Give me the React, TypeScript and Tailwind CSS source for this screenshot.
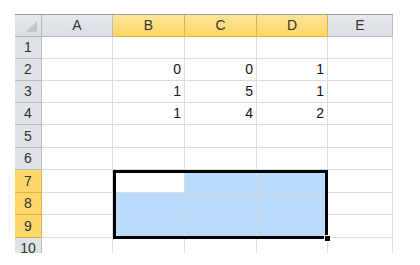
import React from "react";

const cols = ["A", "B", "C", "D", "E"];
const colWidths = [71, 72, 72, 71, 65];
const rowHeights = [22, 22, 22, 22, 23, 22, 23, 22, 23, 22];
const selCols = ["B", "C", "D"];
const selRows = [7, 8, 9];

const data: Record<string, string> = {
  B2: "0",
  C2: "0",
  D2: "1",
  B3: "1",
  C3: "5",
  D3: "1",
  B4: "1",
  C4: "4",
  D4: "2",
};

export default function App() {
  return (
    <div
      className="relative h-[265px] w-[420px] overflow-hidden bg-white pl-[15px] pt-[14px] text-[14px] text-[#111]"
      style={{ fontFamily: '"Liberation Sans", Arial, sans-serif' }}
    >
      <div className="relative h-[239px] w-[378px] overflow-hidden border-t border-[#9c9c9c]">
        <div
          className="grid"
          style={{
            gridTemplateColumns: `27px ${colWidths.map((w) => w + "px").join(" ")}`,
            gridTemplateRows: `22px ${rowHeights.map((h) => h + "px").join(" ")}`,
          }}
        >
          {/* corner */}
          <div className="relative border-r border-b border-[#b2b8bf] bg-gradient-to-b from-[#e4e7eb] to-[#dbdfe4]">
            <div className="absolute bottom-[4px] right-[4px] h-0 w-0 border-b-[11px] border-l-[11px] border-b-[#c3c7cc] border-l-transparent" />
          </div>
          {cols.map((c) =>
            selCols.includes(c) ? (
              <div
                key={c}
                className="flex items-center justify-center border-r border-b border-[#e2b24f] bg-gradient-to-b from-[#fde69a] to-[#fbd55f] text-[#333]"
              >
                {c}
              </div>
            ) : (
              <div
                key={c}
                className="flex items-center justify-center border-r border-b border-[#b8bdc4] bg-gradient-to-b from-[#e4e7eb] to-[#dbdfe4] text-[#333]"
              >
                {c}
              </div>
            ),
          )}
          {rowHeights.map((_, i) => {
            const r = i + 1;
            const rowSel = selRows.includes(r);
            return (
              <React.Fragment key={r}>
                <div
                  className={
                    rowSel
                      ? "flex items-center justify-center border-r border-b border-[#e2b24f] bg-[#fcd86a] text-[#333]"
                      : "flex items-center justify-center border-r border-b border-[#b8bdc4] bg-[#dfe3e8] text-[#333]"
                  }
                >
                  {r}
                </div>
                {cols.map((c) => {
                  const id = c + r;
                  const blue =
                    rowSel && selCols.includes(c) && id !== "B7";
                  return (
                    <div
                      key={id}
                      className={
                        blue
                          ? "flex items-center justify-end border-r border-b border-[#d6d9dc] bg-[#b9dcfd] pr-[3px]"
                          : "flex items-center justify-end border-r border-b border-[#dcdcdc] bg-white pr-[3px]"
                      }
                    >
                      {data[id]}
                    </div>
                  );
                })}
              </React.Fragment>
            );
          })}
        </div>

        {/* selection frame B7:D9 */}
        <div className="pointer-events-none absolute left-[98px] top-[155px] h-[69px] w-[215px] border-[3px] border-black" />
        <div className="absolute left-[309px] top-[220px] h-[7px] w-[7px] border border-white bg-black" />
      </div>
    </div>
  );
}
